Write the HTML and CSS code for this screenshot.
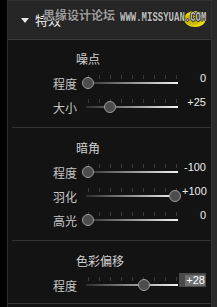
FILE: index.html
```html
<!DOCTYPE html>
<html>
<head>
<meta charset="utf-8">
<link rel="stylesheet" href="styles.css">
</head>
<body>
<div class="app">
  <div class="gutter"></div>
  <div class="panel">
    <div class="header">
      <span class="caret"></span>
      <span class="header-title">特效</span>
      <div class="watermark">
        <span class="wm-oval"></span>
        <span class="wm-cn">思缘设计论坛</span>
        <span class="wm-url">WWW.MISSYUAN.COM</span>
      </div>
    </div>

    <div class="section first">
      <div class="title">噪点</div>
      <div class="row">
        <span class="label">程度</span>
        <div class="slider"><div class="ticks"><i></i><i></i><i></i><i></i><i></i><i></i><i></i><i></i><i></i></div><div class="track"></div><span class="knob" style="left:0px"></span></div>
        <span class="value">0</span>
      </div>
      <div class="row">
        <span class="label">大小</span>
        <div class="slider"><div class="ticks"><i></i><i></i><i></i><i></i><i></i><i></i><i></i><i></i><i></i></div><div class="track"></div><span class="knob" style="left:22px"></span></div>
        <span class="value">+25</span>
      </div>
    </div>
    <div class="sep"></div>

    <div class="section">
      <div class="title">暗角</div>
      <div class="row">
        <span class="label">程度</span>
        <div class="slider"><div class="ticks"><i></i><i></i><i></i><i></i><i></i><i></i><i></i><i></i><i></i></div><div class="track"></div><span class="knob" style="left:0px"></span></div>
        <span class="value">-100</span>
      </div>
      <div class="row">
        <span class="label">羽化</span>
        <div class="slider"><div class="ticks"><i></i><i></i><i></i><i></i><i></i><i></i><i></i><i></i><i></i></div><div class="track"></div><span class="knob" style="left:87px"></span></div>
        <span class="value">+100</span>
      </div>
      <div class="row">
        <span class="label">高光</span>
        <div class="slider"><div class="ticks"><i></i><i></i><i></i><i></i><i></i><i></i><i></i><i></i><i></i></div><div class="track"></div><span class="knob" style="left:0px"></span></div>
        <span class="value">0</span>
      </div>
    </div>
    <div class="sep"></div>

    <div class="section last">
      <div class="title">色彩偏移</div>
      <div class="row">
        <span class="label">程度</span>
        <div class="slider"><div class="ticks"><i></i><i></i><i></i><i></i><i></i><i></i><i></i><i></i><i></i></div><div class="track"></div><span class="knob" style="left:56px"></span></div>
        <span class="value-box"><span class="sel">+28</span></span>
      </div>
    </div>
    <div class="sep full"></div>
  </div>
  <div class="scroll"></div>
</div>
</body>
</html>
```
FILE: styles.css
```css
* { box-sizing: border-box; }
html, body {
  margin: 0;
  padding: 0;
  background: #000;
  width: 217px;
  height: 307px;
  overflow: hidden;
}
body {
  font-family: "Liberation Sans", "Noto Sans CJK SC", sans-serif;
}
.app {
  display: flex;
  height: 307px;
}
.gutter {
  width: 7px;
  background: #000;
  flex: none;
}
.panel {
  width: 204px;
  flex: none;
  background: #131313;
  border-left: 1px solid #2e2e2e;
  display: flex;
  flex-direction: column;
}
.scroll {
  width: 6px;
  flex: none;
  background: #2a2a2a;
  border-left: 1px solid #313131;
}
.header {
  position: relative;
  height: 40px;
  background: #262626;
  border-top: 1px solid #323232;
  border-bottom: 1px solid #3a3a3a;
  display: flex;
  align-items: center;
  padding-left: 13px;
  gap: 6px;
}
.caret {
  width: 0;
  height: 0;
  border-left: 4px solid transparent;
  border-right: 4px solid transparent;
  border-top: 5px solid #e6e6e6;
  margin-top: 0px;
}
.header-title {
  font-family: "Noto Sans CJK SC", sans-serif;
  font-size: 13px;
  line-height: 16px;
  color: #ececec;
}
.watermark {
  position: absolute;
  left: 35px;
  top: 7px;
  width: 166px;
  height: 20px;
}
.wm-oval {
  position: absolute;
  left: 141px;
  top: 3px;
  width: 22px;
  height: 16px;
  border-radius: 50%;
  background: radial-gradient(ellipse at 40% 55%, #c8b800 0 35%, #f2e400 55%, #e0d000 100%);
}
.wm-cn {
  position: absolute;
  left: 0;
  top: -1px;
  font-family: "Noto Sans CJK SC", sans-serif;
  font-size: 12px;
  line-height: 16px;
  font-weight: bold;
  color: #a8a8a8;
  text-shadow: 1px 0 #1e1e1e, -1px 0 #1e1e1e, 0 1px #1e1e1e, 0 -1px #1e1e1e;
  opacity: 0.9;
}
.wm-url {
  position: absolute;
  left: 77px;
  top: 3px;
  font-family: "Liberation Mono", monospace;
  font-weight: bold;
  font-size: 12px;
  line-height: 14px;
  color: #bdbdbd;
  transform: scaleX(0.75);
  transform-origin: left top;
  text-shadow: 1px 0 #1e1e1e, -1px 0 #1e1e1e, 0 1px #1e1e1e, 0 -1px #1e1e1e;
}
.section {
  padding: 12px 5px 8px 45px;
  display: flex;
  flex-direction: column;
}
.section.first { padding-top: 11px; }
.section.last { padding-bottom: 6px; }
.title {
  font-family: "Noto Sans CJK SC", sans-serif;
  font-size: 12px;
  line-height: 16px;
  color: #d2d2d2;
  margin-left: 23px;
  margin-bottom: 4px;
}
.row {
  height: 24px;
  display: flex;
  align-items: center;
}
.label {
  width: 24px;
  flex: none;
  font-family: "Noto Sans CJK SC", sans-serif;
  font-size: 12px;
  line-height: 14px;
  color: #c6c6c6;
  margin-top: 1px;
}
.slider {
  position: relative;
  width: 100px;
  height: 24px;
  margin-left: 5px;
  flex: none;
}
.ticks {
  position: absolute;
  left: 6px;
  top: 4px;
  width: 89px;
  height: 4px;
  display: flex;
  justify-content: space-between;
}
.ticks i {
  width: 1px;
  height: 4px;
  background: #3a3a3a;
}
.track {
  position: absolute;
  left: 4px;
  top: 11px;
  width: 92px;
  height: 2px;
  background: linear-gradient(to right, #2e2e2e, #888 45%, #f4f4f4);
}
.knob {
  position: absolute;
  top: 6px;
  width: 12px;
  height: 12px;
  border-radius: 50%;
  background: #4c4c4c;
  border: 1.5px solid #9c9c9c;
}
.value {
  flex: 1;
  align-self: flex-start;
  text-align: right;
  font-size: 11px;
  line-height: 13px;
  color: #ececec;
  padding-top: 1px;
}
.value-box {
  align-self: flex-start;
  margin-left: -3px;
  width: 30px;
  height: 14px;
  background: #4a4a4a;
  display: flex;
  justify-content: flex-end;
  align-items: center;
  padding-right: 1px;
}
.sel {
  background: #6e6e6e;
  color: #fff;
  font-size: 11px;
  line-height: 11px;
  height: 11px;
  padding: 0 0 0 1px;
}
.sep {
  height: 1px;
  background: #323232;
  margin-left: 4px;
  flex: none;
}
.sep.full {
  margin-left: 0;
  background: #383838;
}
```
